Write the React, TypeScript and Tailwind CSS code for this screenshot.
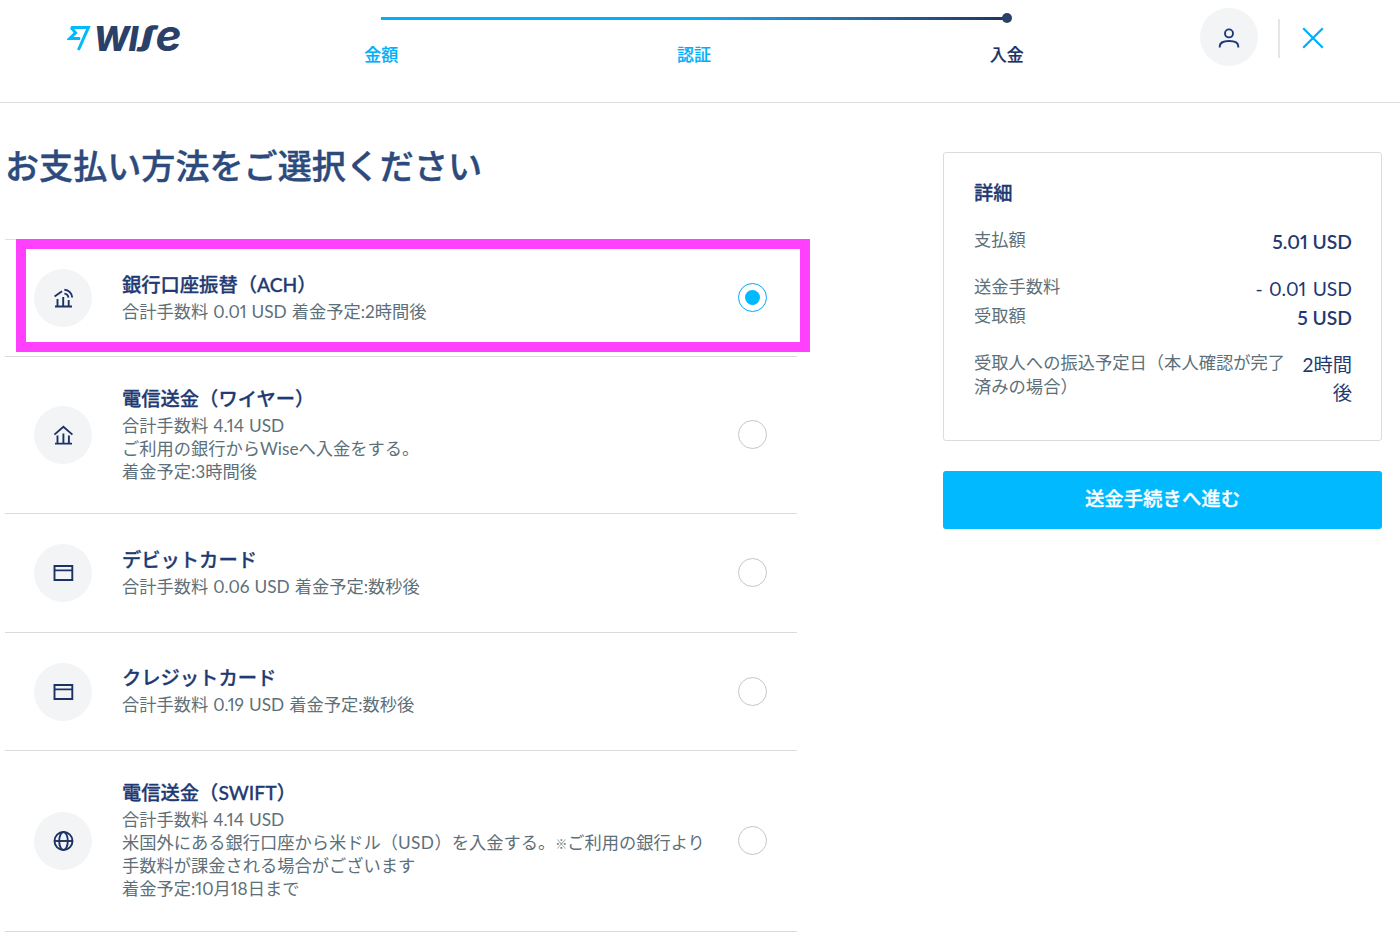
import { useState } from 'react';
import type { ReactNode } from 'react';

interface Metodo {
    id: string;
    titulo: string;
    linhas: ReactNode[];
    icon: 'ach' | 'bank' | 'card' | 'globe';
    altura: string;
}

const metodos: Metodo[] = [
    { id: 'ach', titulo: '銀行口座振替（ACH）', linhas: ['合計手数料 0.01 USD 着金予定:2時間後'], icon: 'ach', altura: 'h-[117px]' },
    { id: 'wire', titulo: '電信送金（ワイヤー）', linhas: ['合計手数料 4.14 USD', 'ご利用の銀行からWiseへ入金をする。', '着金予定:3時間後'], icon: 'bank', altura: 'h-[157px]' },
    { id: 'debit', titulo: 'デビットカード', linhas: ['合計手数料 0.06 USD 着金予定:数秒後'], icon: 'card', altura: 'h-[119px]' },
    { id: 'credit', titulo: 'クレジットカード', linhas: ['合計手数料 0.19 USD 着金予定:数秒後'], icon: 'card', altura: 'h-[118px]' },
    {
        id: 'swift',
        titulo: '電信送金（SWIFT）',
        linhas: [
            '合計手数料 4.14 USD',
            <>米国外にある銀行口座から米ドル（<span className='tracking-[0.4px]'>USD</span>）を入金する。<span className='text-[12px] font-bold'>※</span>ご利用の銀行より</>,
            '手数料が課金される場合がございます',
            '着金予定:10月18日まで',
        ],
        icon: 'globe',
        altura: 'h-[181px]',
    },
];

function MetodoIcon({ icon }: { icon: Metodo['icon'] }) {
    return (
        <svg width='24' height='24' viewBox='0 0 24 24' fill='none' stroke='#1c3266' strokeWidth='1.9'>
            {icon === 'ach' && (
                <>
                    <path d='M3.6 10.6 11 5.2' />
                    <path d='M4 20.5h17M6.5 20v-7M12.2 20v-9M17.7 20v-6' />
                    <path d='M13.4 3.8a8 8 0 0 1 7.8 7.8M13.4 7.6a4.4 4.4 0 0 1 4 4' />
                </>
            )}
            {icon === 'bank' && <path d='M3.4 11.6 12.4 3.8l9 7.8M4 20.6h17M6.5 20v-7.5M12.4 20v-9.5M17.9 20v-7.5' />}
            {icon === 'card' && <path d='M3.5 5h17.8v14H3.5zM3.5 9.4h17.8' />}
            {icon === 'globe' && (
                <>
                    <circle cx='12.5' cy='12' r='9' />
                    <ellipse cx='12.5' cy='12' rx='4.3' ry='9' />
                    <path d='M3.5 12h18' />
                </>
            )}
        </svg>
    );
}

function Logo() {
    return (
        <svg width='130' height='60' viewBox='0 -22 130 60' role='img' aria-label='Wise'>
            <path d='M4 5.4h17.4L11.4 28M4 5.4l4.6 5.4-6 5.8h10.6' fill='none' stroke='#00b9ff' strokeWidth='3' />
            <g fill='#2a4068' fontFamily='Inter, sans-serif' fontWeight='800' fontStyle='italic' fontSize='34'>
                <text x='26.5' y='28.8' textLength='36' lengthAdjust='spacingAndGlyphs'>W</text>
                <text x='61.5' y='28.8'>I</text>
                <text x='74' y='23.4' fontSize='25' stroke='#2a4068' strokeWidth='1' textLength='14' lengthAdjust='spacingAndGlyphs'>ʃ</text>
                <text x='88.5' y='28.6' fontSize='44' fontWeight='700' textLength='26' lengthAdjust='spacingAndGlyphs'>e</text>
            </g>
        </svg>
    );
}

function Header() {
    return (
        <header className='flex h-[103px] border-b border-[#d9dde0]'>
            <div className='w-[225px] pl-[67px]'>
                <Logo />
            </div>
            <div className='w-[938px]'>
                <div className='mx-[156px] mt-[16px] flex h-[4px] items-center'>
                    <div className='h-[3px] flex-1 bg-linear-to-r from-[#00b0fb] from-50% to-[#203562]'></div>
                    <div className='-ml-[5px] -mr-[5px] size-[10px] rounded-full bg-[#2a4068]'></div>
                </div>
                <div className='mt-[22px] grid grid-cols-3 text-center text-[17px] leading-[25px] font-medium text-[#00b0fb] [-webkit-text-stroke:0.2px]'>
                    <span>金額</span>
                    <span>認証</span>
                    <span className='text-[#1c3266]'>入金</span>
                </div>
            </div>
            <div className='flex h-[60px] items-center mt-[8px] ml-[37px]'>
                <button className='flex size-[58px] items-center justify-center self-start rounded-full bg-[#f2f4f6] pt-[2px]'>
                    <svg width='24' height='24' viewBox='0 0 24 24' fill='none' stroke='#1f3a78' strokeWidth='1.9'>
                        <circle cx='12' cy='7.4' r='4' />
                        <path d='M2.7 21.6v-1.2c0-3.6 4.1-5.4 9.3-5.4s9.3 1.8 9.3 5.4v1.2' />
                    </svg>
                </button>
                <div className='ml-[20px] h-[39px] w-[2px] bg-[#e3e6e9]'></div>
                <button className='ml-[21px]'>
                    <svg width='24' height='24' viewBox='0 0 24 24' fill='none' stroke='#00b0fb' strokeWidth='2.3'>
                        <path d='M2.2 2.2 21.8 21.8M21.8 2.2 2.2 21.8' />
                    </svg>
                </button>
            </div>
        </header>
    );
}

function Radio({ checked, onClick }: { checked: boolean; onClick: () => void }) {
    return (
        <button
            role='radio'
            aria-checked={checked}
            onClick={onClick}
            className={`mb-px flex size-[29px] items-center justify-center rounded-full border-[1.5px] bg-white ${checked ? 'border-[#00a9f4]' : 'border-[#c3c7cb]'}`}
        >
            {checked && <span className='size-[15px] rounded-full bg-[#00b9ff]'></span>}
        </button>
    );
}

function Detalhes() {
    return (
        <div className='h-[289px] rounded-[3px] border border-[#d8dddf] px-[30px] pt-[26px] text-[17.25px] leading-[24px] text-[#5d7079]'>
            <h2 className='text-[19.3px] leading-[28px] font-medium text-[#1f3a72] [-webkit-text-stroke:0.3px]'>詳細</h2>
            <div className='mt-[21px] -mr-px flex justify-between'>
                <span>支払額</span>
                <span className='text-[19.3px] leading-[28px] font-semibold text-[#1f3a72]'>5.01 USD</span>
            </div>
            <div className='mt-[19px] -mr-px flex justify-between'>
                <span>送金手数料</span>
                <span className='text-[19.3px] leading-[28px] text-[#1f3a72] [word-spacing:1.5px]'>- 0.01 USD</span>
            </div>
            <div className='mt-px -mr-px flex justify-between'>
                <span>受取額</span>
                <span className='text-[19.3px] leading-[28px] font-semibold text-[#1f3a72]'>5 USD</span>
            </div>
            <div className='mt-[19px] -mr-px flex justify-between'>
                <span className='w-[315px] text-[17.3px]'>受取人への振込予定日（本人確認が完了済みの場合）</span>
                <span className='w-[54px] text-right text-[19.3px] leading-[28px] text-[#1f3a72]'>2時間<br />後</span>
            </div>
        </div>
    );
}

export default function App() {
    const [selected, setSelected] = useState('ach');

    return (
        <div lang='ja' className="h-[950px] w-[1400px] overflow-hidden bg-white proportional-nums font-['Lato','Noto_Sans_CJK_JP',sans-serif]">
            <Header />
            <main className='flex justify-between pl-[5px] pr-[18px]'>
                <section className='w-[792px]'>
                    <h1 className='mt-[38px] h-[98px] whitespace-nowrap text-[34.1px] leading-[50px] font-medium text-[#2c4a7c] [-webkit-text-stroke:0.4px]'>お支払い方法をご選択ください</h1>
                    <div className='relative border-t border-[#dde1e3]' role='radiogroup'>
                        {metodos.map((m) => (
                            <div key={m.id} className={`flex items-center border-b border-[#d8dcdf] pl-[29px] pr-[30px] ${m.altura}`}>
                                <div className='flex size-[58px] shrink-0 items-center justify-center rounded-full bg-[#f2f4f6]'>
                                    <MetodoIcon icon={m.icon} />
                                </div>
                                <div className='ml-[30px] flex-1 whitespace-nowrap pb-[3px]'>
                                    <h3 className='h-[29px] text-[19.3px] leading-[28px] font-medium text-[#1f3a72] [-webkit-text-stroke:0.3px]'>{m.titulo}</h3>
                                    {m.linhas.map((linha, i) => (
                                        <p key={i} className='h-[23px] text-[17.25px] leading-[23px] text-[#5d7079] [word-spacing:0.6px]'>{linha}</p>
                                    ))}
                                </div>
                                <Radio checked={selected === m.id} onClick={() => setSelected(m.id)} />
                            </div>
                        ))}
                        {/* destaque sobre a primeira opção */}
                        <div className='pointer-events-none absolute -top-px left-[11px] h-[113px] w-[794px] border-[10px] border-[#ff40ff]'></div>
                    </div>
                </section>
                <aside className='mt-[49px] w-[439px]'>
                    <Detalhes />
                    <button className='mt-[30px] h-[58px] w-full rounded-[3px] bg-[#00b9ff] pb-[2px] text-[19.4px] font-medium text-white [-webkit-text-stroke:0.3px]'>送金手続きへ進む</button>
                </aside>
            </main>
        </div>
    );
}
